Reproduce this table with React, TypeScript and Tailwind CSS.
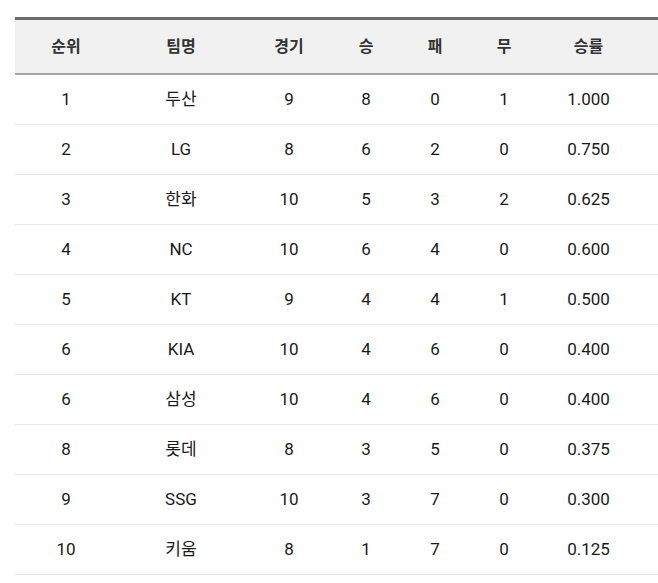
const rows = [
  ["1", "두산", "9", "8", "0", "1", "1.000"],
  ["2", "LG", "8", "6", "2", "0", "0.750"],
  ["3", "한화", "10", "5", "3", "2", "0.625"],
  ["4", "NC", "10", "6", "4", "0", "0.600"],
  ["5", "KT", "9", "4", "4", "1", "0.500"],
  ["6", "KIA", "10", "4", "6", "0", "0.400"],
  ["6", "삼성", "10", "4", "6", "0", "0.400"],
  ["8", "롯데", "8", "3", "5", "0", "0.375"],
  ["9", "SSG", "10", "3", "7", "0", "0.300"],
  ["10", "키움", "8", "1", "7", "0", "0.125"],
];

const headers = ["순위", "팀명", "경기", "승", "패", "무", "승률"];

const grid = "grid grid-cols-[102px_128px_88px_66px_72px_66px_1fr]";

export default function App() {
  return (
    <div className="min-h-[583px] bg-white pt-[17px] pl-[15px] font-['Roboto','Noto_Sans_CJK_KR',sans-serif]">
      <div className="w-[643px] border-t-[3px] border-[#6b6b6b]">
        <div className={`${grid} h-[55px] items-center bg-[#f1f1f1] border-b-2 border-[#a3a3a3] text-[16px] font-bold text-[#333]`}>
          {headers.map((h, i) => (
            <div key={h} className={`text-center ${i === 6 ? "pr-[18px]" : ""}`}>{h}</div>
          ))}
        </div>
        {rows.map((r, ri) => (
          <div key={ri} className={`${grid} h-[50px] items-center border-b border-[#e8e8e8] text-[17px] text-[#1a1a1a]`}>
            {r.map((c, i) => (
              <div key={i} className={`text-center ${i === 6 ? "pr-[18px]" : ""}`}>{c}</div>
            ))}
          </div>
        ))}
      </div>
    </div>
  );
}
